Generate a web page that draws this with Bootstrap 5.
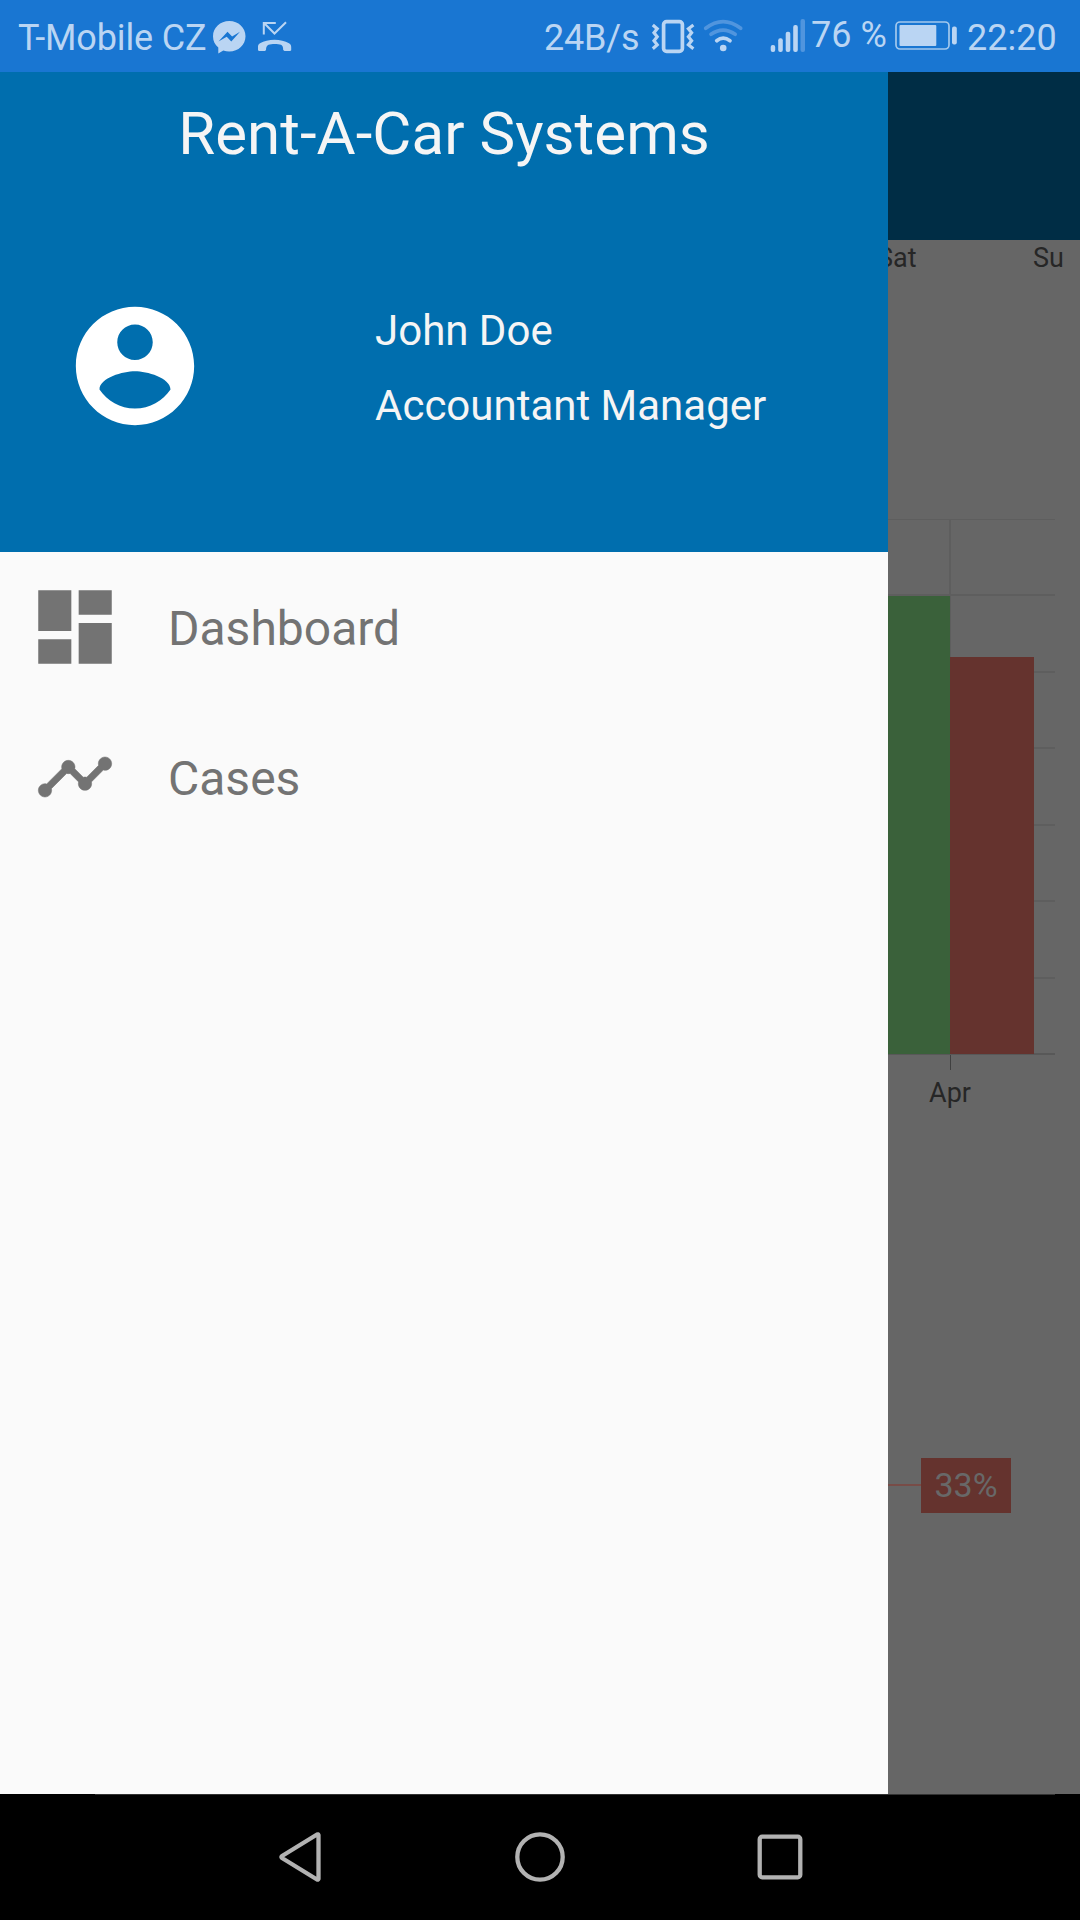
<!DOCTYPE html>
<html lang="en">
<head>
<meta charset="utf-8">
<meta name="viewport" content="width=device-width, initial-scale=1">
<title>Rent-A-Car Systems</title>
<link href="https://cdn.jsdelivr.net/npm/bootstrap@5.3.0/dist/css/bootstrap.min.css" rel="stylesheet">
<style>
body{font-family:Roboto,"Liberation Sans",sans-serif;background:#000;}
svg{display:block;flex:none;}
.phone{width:1080px;height:1920px;}
.status-bar{height:72px;background:#1976d2;color:#bad5f3;font-size:36px;line-height:77px;}
.status-bar span{flex:none;}
.carrier{width:194px;margin-left:18px;letter-spacing:-.15px;}
.speed{width:107px;margin-left:252px;letter-spacing:-.2px;}
.percent{width:84px;line-height:71px;padding-left:2px;}
.clock{width:92px;margin-left:9px;}
.screen{height:1722px;}
.drawer{width:888px;background:#fafafa;}
.drawer-head{height:480px;background:#006eae;color:#f5f5f5;}
.app-title{font-size:60px;line-height:123px;font-weight:400;letter-spacing:.05px;}
.profile{height:342px;padding-left:64px;}
.profile-text{font-size:42px;line-height:75px;margin-left:169px;padding-top:3px;}
.drawer-item{height:150px;color:#737373;font-size:48px;line-height:75px;background:none;padding:0;}
.item-icon{width:168px;padding-left:26px;}
.item-icon.trend{padding-left:35px;}
.item-label{padding-top:3px;}
.dimmed{width:192px;background:#666;color:#262626;font-size:27px;}
.app-bar{height:168px;background:#002d45;}
.days{height:36px;line-height:36px;padding-right:16px;margin-left:-11px;}
.chart-wrap{padding-top:240px;}
.month{line-height:36px;width:124px;}
.callout{margin-top:347px;}
.leader{width:33px;height:2px;background:#784c47;margin-bottom:1px;}
.share{width:90px;height:55px;line-height:54px;background:#65332e;color:#686868;font-size:34px;}
.nav-keys{height:125px;padding:0 275px 0 276px;}
.nav-line{height:1px;background:#333;margin:0 25px 0 95px;}
</style>
<script src="https://cdn.jsdelivr.net/npm/bootstrap@5.3.0/dist/js/bootstrap.bundle.min.js"></script>
</head>
<body>
<div class="phone d-flex flex-column overflow-hidden">
  <header class="status-bar d-flex text-nowrap">
    <span class="carrier">T-Mobile CZ</span>
    <svg width="80" height="72" viewBox="212 0 80 72" fill="#bad5f3">
      <path d="M229.300 21c-9.200 0-16.300 6.700-16.300 15.200 0 4.800 2 8.500 5.300 11.300v6l5-3c2 .6 3.900.9 6 .9 9.200 0 16.200-6.700 16.200-15.200S238.500 21 229.300 21z"/>
      <path fill="#1976d2" d="M218.500 41.500l9-9.800 4.600 4.700 7.900-4.700-8.700 9.700-4.600-4.700z"/>
      <path fill="none" stroke="#bad5f3" stroke-width="2" d="M263.800 34.500V23h12M264 23l10.500 10.500L286 22.300"/>
      <path d="M258 47c0-2 .5-2.700 2-3.700 4-2.300 9-3.500 14.500-3.500s10.500 1.200 14.500 3.500c1.500 1 2.200 1.700 2.200 3.700v3.200l-1 .8h-5.700l-1.300-1c0-3-.7-4.500-2.200-5.300-3-1-9.500-1-12.500 0-1.500.8-2.500 2.300-2.500 5.300l-1 1h-6l-1-.8z"/>
    </svg>
    <span class="speed">24B/s</span>
    <svg width="100" height="72" viewBox="651 0 100 72" fill="none" stroke="#bad5f3">
      <rect x="663.600" y="21.600" width="18.800" height="29.800" rx="3" stroke-width="3.700"/>
      <path stroke-width="3.200" d="M652.800 25l4.400 3.800-3.200 4 3.200 4-3.200 4 3.200 4-4.400 3.900M693.400 25l-5 3.800 3.200 4-3.200 4 3.200 4-3.200 4 5 3.900"/>
      <g stroke-width="3.700" stroke-linecap="round">
        <path stroke="#5095de" d="M705.700 28.300Q723 14.800 740.700 28.300M711 34.300q12-8.500 24.200 0"/>
        <path d="M716.700 40.700q6.400-5 13.300 0"/>
      </g>
      <circle cx="723.200" cy="48" r="3.300" fill="#bad5f3" stroke="none"/>
    </svg>
    <svg class="ms-3" width="42" height="72" viewBox="767 0 42 72" fill="#bad5f3">
      <rect x="770.700" y="45" width="4.500" height="7" rx="2"/><rect x="778.200" y="38.300" width="4.600" height="13.700" rx="2"/><rect x="785.700" y="31.700" width="4.600" height="20.300" rx="2"/><rect x="793.200" y="25" width="4.600" height="27" rx="2"/><rect x="800.500" y="19" width="4.500" height="33" rx="2" fill="#5095de"/>
    </svg>
    <span class="percent">76 %</span>
    <svg width="65" height="72" viewBox="893 0 65 72" fill="#bad5f3">
      <rect x="896" y="22" width="53" height="27" rx="4" fill="none" stroke="#a3c8ed" stroke-width="1.700"/><rect x="899.500" y="25" width="36.800" height="21" rx="1"/><rect x="952" y="26.500" width="4.800" height="18" rx="2"/>
    </svg>
    <span class="clock">22:20</span>
  </header>

  <main class="screen d-flex">
    <aside class="drawer flex-shrink-0">
      <div class="drawer-head">
        <h1 class="app-title text-center m-0">Rent-A-Car Systems</h1>
        <div class="profile d-flex align-items-center">
          <svg width="142" height="142" viewBox="0 0 24 24" fill="#fff"><path d="M12 2C6.480 2 2 6.480 2 12s4.480 10 10 10 10-4.480 10-10S17.520 2 12 2zm0 3c1.660 0 3 1.340 3 3s-1.340 3-3 3-3-1.340-3-3 1.340-3 3-3zm0 14.200c-2.500 0-4.710-1.280-6-3.220.03-1.990 4-3.080 6-3.080 1.990 0 5.970 1.090 6 3.080-1.290 1.940-3.500 3.220-6 3.220z"/></svg>
          <div class="profile-text"><div>John Doe</div><div>Accountant Manager</div></div>
        </div>
      </div>
      <nav class="list-group list-group-flush">
        <a class="drawer-item list-group-item border-0 d-flex align-items-center">
          <div class="item-icon"><svg width="98" height="98" viewBox="0 0 24 24" fill="#737373"><path d="M3 13h8.100V3H3v10zm0 8h8.100v-6H3v6zm9.900 0H21V11h-8.100v10zm0-18v6H21V3h-8.100z"/></svg></div>
          <div class="item-label">Dashboard</div>
        </a>
        <a class="drawer-item list-group-item border-0 d-flex align-items-center">
          <div class="item-icon trend"><svg width="80" height="80" viewBox="0 0 24 24" fill="#737373" stroke="#737373" stroke-width=".15"><path d="M23 8c0 1.100-.9 2-2 2-.18 0-.35-.02-.51-.07l-3.560 3.550c.05.16.07.34.07.52 0 1.100-.9 2-2 2s-2-.9-2-2c0-.18.02-.36.07-.52l-2.550-2.550c-.16.05-.34.07-.52.07s-.36-.02-.52-.07l-4.550 4.560c.05.16.07.33.07.51 0 1.100-.9 2-2 2s-2-.9-2-2 .9-2 2-2c.18 0 .35.02.51.07l4.560-4.550C8.020 9.360 8 9.180 8 9c0-1.100.9-2 2-2s2 .9 2 2c0 .18-.02.36-.07.52l2.550 2.550c.16-.05.34-.07.52-.07s.36.02.52.07l3.550-3.560C19.020 8.350 19 8.180 19 8c0-1.100.9-2 2-2s2 .9 2 2z"/></svg></div>
          <div class="item-label">Cases</div>
        </a>
      </nav>
    </aside>

    <section class="dimmed overflow-hidden">
      <div class="app-bar"></div>
      <div class="days d-flex justify-content-between"><span>Sat</span><span>Su</span></div>
      <div class="chart-wrap">
        <svg width="192" height="559" viewBox="888 516 192 559">
          <g stroke="#5e5e5e" stroke-width="2">
            <path stroke-width="1" d="M888 519.500h167"/>
            <path d="M888 595h167M888 672h167M888 748h167M888 825h167M888 901h167M888 978h167M950 519v535"/>
          </g>
          <path stroke="#585858" stroke-width="2" d="M888 1054h167"/>
          <path fill="#3a613a" d="M888 596h62v458h-62z"/>
          <path fill="#65332e" d="M950 657h84v397h-84z"/>
          <path stroke="#404040" d="M950.500 1055v15"/>
        </svg>
        <div class="month text-center">Apr</div>
      </div>
      <div class="callout d-flex align-items-center"><div class="leader"></div><div class="share text-center">33%</div></div>
    </section>
  </main>

  <footer>
    <div class="nav-line"></div>
    <div class="nav-keys d-flex justify-content-between">
      <svg width="48" height="124" viewBox="276 1795 48 124"><path fill="none" stroke="#b2b2b2" stroke-width="4.300" stroke-linejoin="round" d="M318.500 1835v44q-.3 1-1.500.5l-35-21.500q-1-1 0-2l35-21.500q1.200-.5 1.500.5z"/></svg>
      <svg class="home-key" width="53" height="124" viewBox="514 1795 53 124"><circle cx="540" cy="1857" r="22.700" fill="none" stroke="#b2b2b2" stroke-width="4.300"/></svg>
      <svg width="48" height="124" viewBox="757 1795 48 124"><rect x="759.700" y="1836.700" width="40.600" height="40.600" rx="2.500" fill="none" stroke="#b2b2b2" stroke-width="4.300"/></svg>
    </div>
  </footer>
</div>
</body>
</html>
